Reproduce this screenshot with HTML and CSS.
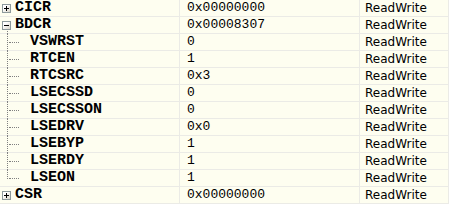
FILE: index.html
```html
<!DOCTYPE html>
<html>
<head>
<meta charset="utf-8">
<link rel="stylesheet" href="styles.css">
</head>
<body>
<div class="table">
  <div class="row">
    <div class="cell name"><span class="box plus"></span><span class="label top">CICR</span></div>
    <div class="cell value">0x00000000</div>
    <div class="cell access">ReadWrite</div>
  </div>
  <div class="row">
    <div class="cell name"><span class="box minus"></span><span class="label top">BDCR</span><span class="stem-down"></span></div>
    <div class="cell value">0x00008307</div>
    <div class="cell access">ReadWrite</div>
  </div>
  <div class="row">
    <div class="cell name child"><span class="tree"></span><span class="label">VSWRST</span></div>
    <div class="cell value">0</div>
    <div class="cell access">ReadWrite</div>
  </div>
  <div class="row">
    <div class="cell name child"><span class="tree"></span><span class="label">RTCEN</span></div>
    <div class="cell value">1</div>
    <div class="cell access">ReadWrite</div>
  </div>
  <div class="row">
    <div class="cell name child"><span class="tree"></span><span class="label">RTCSRC</span></div>
    <div class="cell value">0x3</div>
    <div class="cell access">ReadWrite</div>
  </div>
  <div class="row">
    <div class="cell name child"><span class="tree"></span><span class="label">LSECSSD</span></div>
    <div class="cell value">0</div>
    <div class="cell access">ReadWrite</div>
  </div>
  <div class="row">
    <div class="cell name child"><span class="tree"></span><span class="label">LSECSSON</span></div>
    <div class="cell value">0</div>
    <div class="cell access">ReadWrite</div>
  </div>
  <div class="row">
    <div class="cell name child"><span class="tree"></span><span class="label">LSEDRV</span></div>
    <div class="cell value">0x0</div>
    <div class="cell access">ReadWrite</div>
  </div>
  <div class="row">
    <div class="cell name child"><span class="tree"></span><span class="label">LSEBYP</span></div>
    <div class="cell value">1</div>
    <div class="cell access">ReadWrite</div>
  </div>
  <div class="row">
    <div class="cell name child"><span class="tree"></span><span class="label">LSERDY</span></div>
    <div class="cell value">1</div>
    <div class="cell access">ReadWrite</div>
  </div>
  <div class="row">
    <div class="cell name child last"><span class="tree"></span><span class="label">LSEON</span></div>
    <div class="cell value">1</div>
    <div class="cell access">ReadWrite</div>
  </div>
  <div class="row">
    <div class="cell name"><span class="box plus"></span><span class="label top">CSR</span></div>
    <div class="cell value">0x00000000</div>
    <div class="cell access">ReadWrite</div>
  </div>
</div>
</body>
</html>
```

FILE: styles.css
```css
html, body {
  margin: 0;
  padding: 0;
  background: #ffffff;
}

.table {
  width: 449px;
  display: flex;
  flex-direction: column;
}

.row {
  display: grid;
  grid-template-columns: 180px 180px 89px;
  height: 17px;
}

.cell {
  position: relative;
  background: #fefef0;
  border-right: 1px solid #ebebe6;
  border-bottom: 1px solid #ebebe6;
  height: 16px;
  line-height: 16px;
  white-space: nowrap;
  color: #000;
}

.name {
  display: flex;
  align-items: center;
}

.label {
  font-family: "Liberation Mono", monospace;
  font-weight: bold;
  font-size: 15px;
  line-height: 16px;
  margin-left: 30px;
}

.label.top {
  margin-left: 4px;
}

.box {
  display: block;
  position: relative;
  width: 7px;
  height: 7px;
  margin-left: 2px;
  margin-top: 1px;
  border: 1px solid #8e9a9c;
  background: linear-gradient(135deg, #ffffff 30%, #d8d4c8 100%);
}

.box::before {
  content: "";
  position: absolute;
  left: 1px;
  top: 3px;
  width: 5px;
  height: 1px;
  background: #000;
}

.box.plus::after {
  content: "";
  position: absolute;
  left: 3px;
  top: 1px;
  width: 1px;
  height: 5px;
  background: #000;
}

.stem-down {
  position: absolute;
  left: 7px;
  top: 14px;
  width: 0;
  height: 3px;
  border-left: 1px dotted #808080;
}

.tree {
  position: absolute;
  left: 7px;
  top: 0;
  bottom: -1px;
  width: 11px;
  border-left: 1px dotted #808080;
}

.tree::after {
  content: "";
  position: absolute;
  left: 1px;
  top: 8px;
  width: 10px;
  height: 0;
  border-top: 1px dotted #808080;
}

.last .tree {
  bottom: auto;
  height: 9px;
}

.value {
  font-family: "Liberation Mono", monospace;
  font-size: 13px;
  padding-left: 7px;
}

.access {
  font-family: "DejaVu Sans", sans-serif;
  font-size: 12px;
  padding-left: 5px;
}
```
